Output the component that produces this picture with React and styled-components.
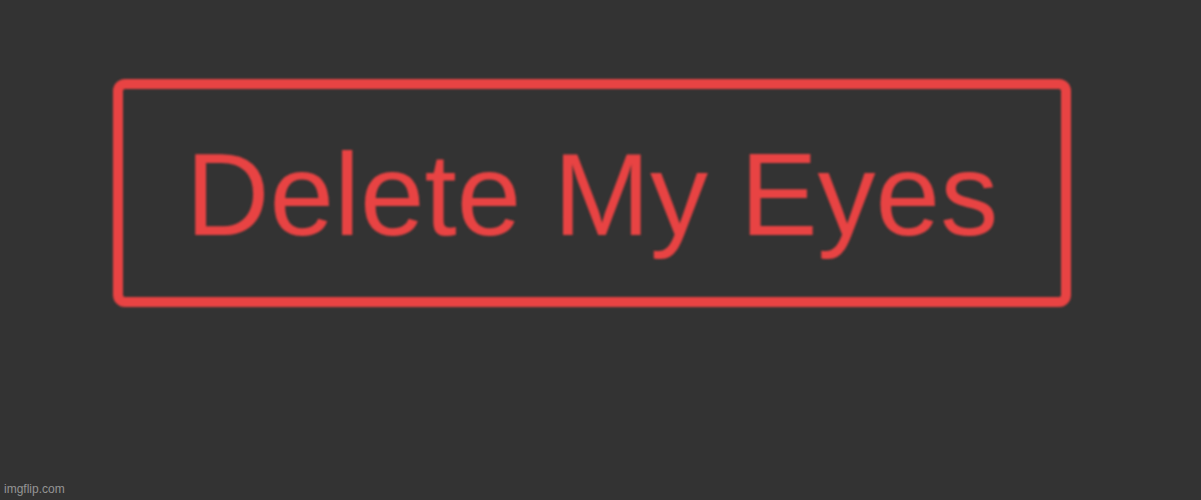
import React from 'react'
import styled, {createGlobalStyle} from 'styled-components'

const GlobalStl = createGlobalStyle`
  html, body {
    margin: 0;
    padding: 0;
    background: #333333;
  }
`

const PageStl = styled.div`
  position: relative;
  width: 1201px;
  height: 500px;
  box-sizing: border-box;
  padding: 79px 0 0 113px;
  background: #333333;
  overflow: hidden;
`

const ButtonStl = styled.button`
  width: 958px;
  height: 228px;
  box-sizing: border-box;
  display: flex;
  align-items: center;
  justify-content: center;
  padding: 4px 0 0;
  background: transparent;
  border: 10px solid #e84343;
  border-radius: 12px;
  color: #e84343;
  font-family: "Liberation Sans", Arial, sans-serif;
  font-size: 116px;
  line-height: 1;
  cursor: pointer;
  filter: blur(1.2px);
`

// watermark sits over the canvas corner
const WatermarkStl = styled.span`
  position: absolute;
  left: 4px;
  bottom: 4px;
  font-family: "Liberation Sans", Arial, sans-serif;
  font-size: 12px;
  color: #959595;
`

export default function App() {
  return (
    <PageStl>
      <GlobalStl />
      <ButtonStl>Delete My Eyes</ButtonStl>
      <WatermarkStl>imgflip.com</WatermarkStl>
    </PageStl>
  )
}
